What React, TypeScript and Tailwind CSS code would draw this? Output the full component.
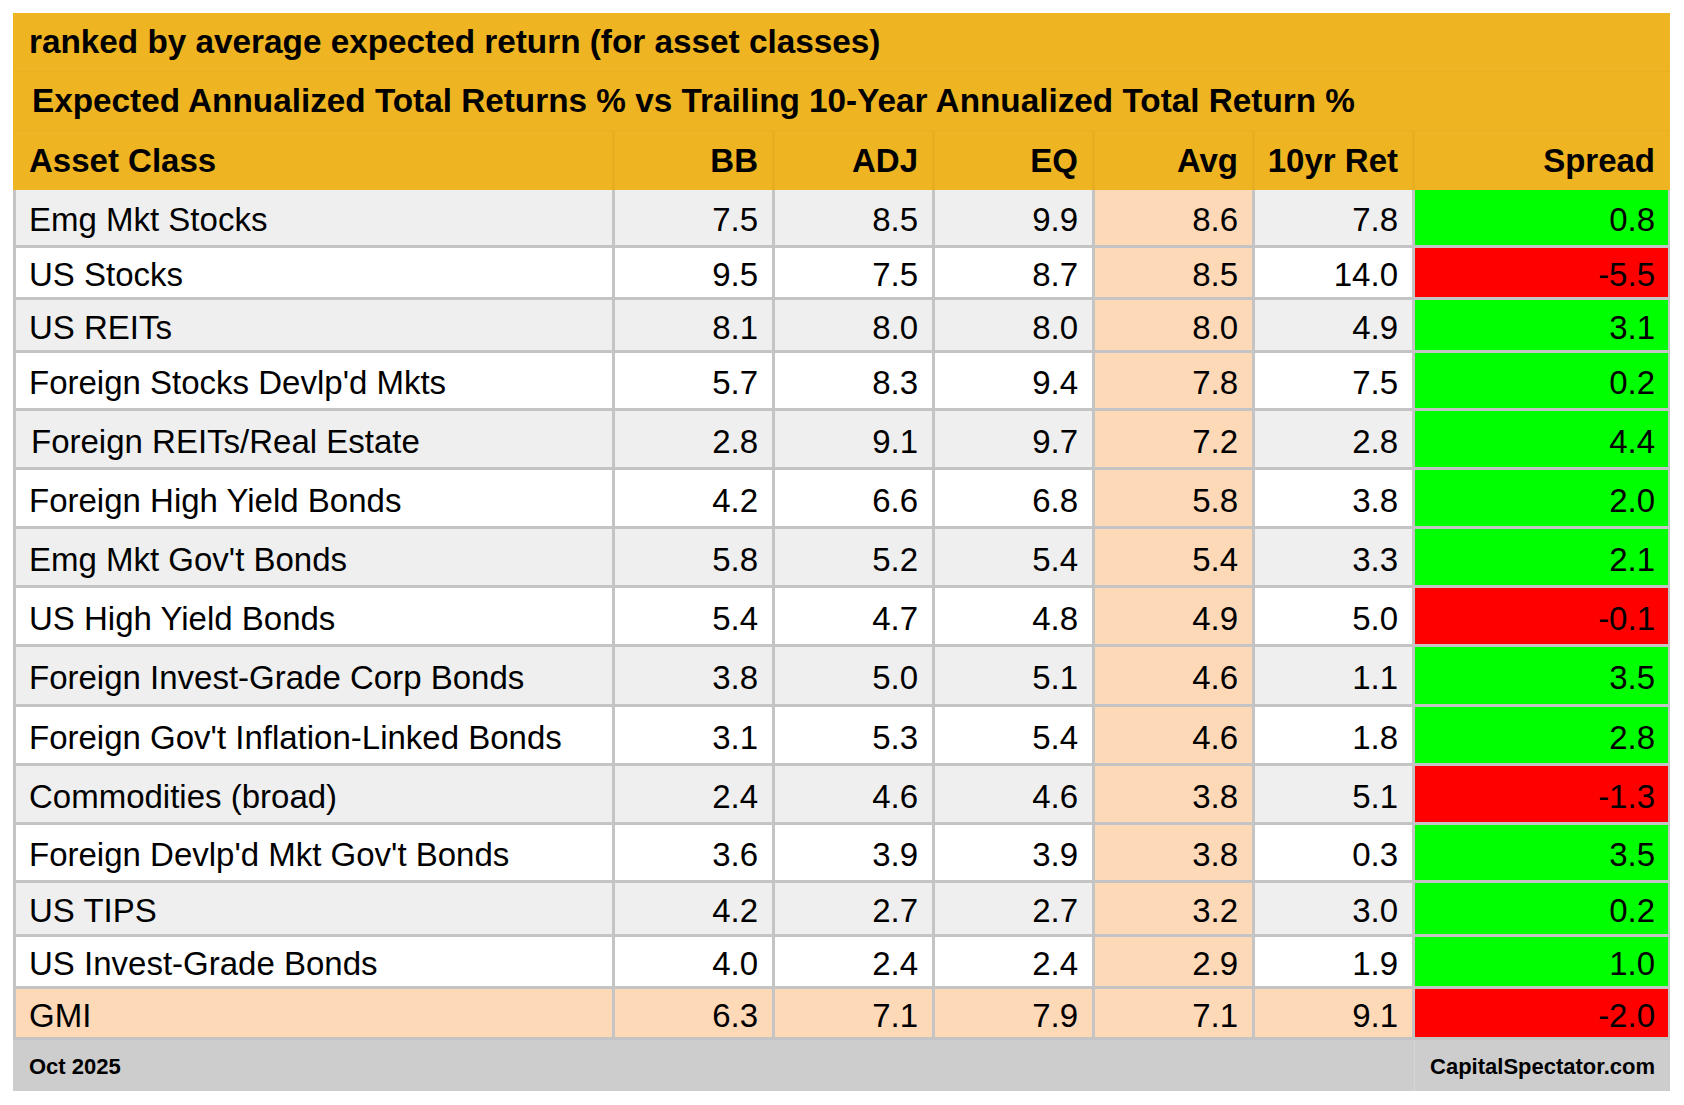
import React from 'react';

type Row = {
  name: string;
  vals: string[];
  spread: string;
  h: string;
  bg: string;
  indent?: boolean;
};

const rows: Row[] = [
  { name: 'Emg Mkt Stocks', vals: ['7.5', '8.5', '9.9', '8.6', '7.8'], spread: '0.8', h: 'h-[55px]', bg: 'bg-[#efefef]' },
  { name: 'US Stocks', vals: ['9.5', '7.5', '8.7', '8.5', '14.0'], spread: '-5.5', h: 'h-[49px]', bg: 'bg-white' },
  { name: 'US REITs', vals: ['8.1', '8.0', '8.0', '8.0', '4.9'], spread: '3.1', h: 'h-[50px]', bg: 'bg-[#efefef]' },
  { name: "Foreign Stocks Devlp'd Mkts", vals: ['5.7', '8.3', '9.4', '7.8', '7.5'], spread: '0.2', h: 'h-[55px]', bg: 'bg-white' },
  { name: 'Foreign REITs/Real Estate', vals: ['2.8', '9.1', '9.7', '7.2', '2.8'], spread: '4.4', h: 'h-[56px]', bg: 'bg-[#efefef]', indent: true },
  { name: 'Foreign High Yield Bonds', vals: ['4.2', '6.6', '6.8', '5.8', '3.8'], spread: '2.0', h: 'h-[56px]', bg: 'bg-white' },
  { name: "Emg Mkt Gov't Bonds", vals: ['5.8', '5.2', '5.4', '5.4', '3.3'], spread: '2.1', h: 'h-[56px]', bg: 'bg-[#efefef]' },
  { name: 'US High Yield Bonds', vals: ['5.4', '4.7', '4.8', '4.9', '5.0'], spread: '-0.1', h: 'h-[56px]', bg: 'bg-white' },
  { name: 'Foreign Invest-Grade Corp Bonds', vals: ['3.8', '5.0', '5.1', '4.6', '1.1'], spread: '3.5', h: 'h-[57px]', bg: 'bg-[#efefef]' },
  { name: "Foreign Gov't Inflation-Linked Bonds", vals: ['3.1', '5.3', '5.4', '4.6', '1.8'], spread: '2.8', h: 'h-[56px]', bg: 'bg-white' },
  { name: 'Commodities (broad)', vals: ['2.4', '4.6', '4.6', '3.8', '5.1'], spread: '-1.3', h: 'h-[56px]', bg: 'bg-[#efefef]' },
  { name: "Foreign Devlp'd Mkt Gov't Bonds", vals: ['3.6', '3.9', '3.9', '3.8', '0.3'], spread: '3.5', h: 'h-[55px]', bg: 'bg-white' },
  { name: 'US TIPS', vals: ['4.2', '2.7', '2.7', '3.2', '3.0'], spread: '0.2', h: 'h-[51px]', bg: 'bg-[#efefef]' },
  { name: 'US Invest-Grade Bonds', vals: ['4.0', '2.4', '2.4', '2.9', '1.9'], spread: '1.0', h: 'h-[49px]', bg: 'bg-white' },
  { name: 'GMI', vals: ['6.3', '7.1', '7.9', '7.1', '9.1'], spread: '-2.0', h: 'h-[48px]', bg: 'bg-[#fdd9b8]' },
];

const cols = 'grid grid-cols-[596px_157px_157px_157px_157px_157px_253px]';

const App = () => {
  return (
    <div className="min-h-screen bg-white pl-[13px] pt-[13px] text-black leading-[1.15] font-['Liberation_Sans',Arial,sans-serif]">
      <div className="w-[1657px]">
        {/* titles */}
        <div className="bg-[#eeb422]">
          <div className="h-[59px] flex items-center pl-[16px] border-b border-[#e9b024] text-[33.3px] font-bold">
            ranked by average expected return (for asset classes)
          </div>
          <div className="h-[59px] flex items-center pl-[19px] border-b border-[#e9b024] text-[33.3px] font-bold">
            Expected Annualized Total Returns % vs Trailing 10-Year Annualized Total Return %
          </div>
        </div>

        {/* header */}
        <div className={`${cols} h-[59px] bg-[#e8ae22] gap-x-[3px] pl-[3px] pr-[2px] text-[33px] font-bold`}>
          <div className="bg-[#eeb422] -ml-[3px] pl-[16px] flex items-center">Asset Class</div>
          {['BB', 'ADJ', 'EQ', 'Avg', '10yr Ret'].map((h) => (
            <div key={h} className="bg-[#eeb422] flex items-center justify-end pr-[14px]">
              {h}
            </div>
          ))}
          <div className="bg-[#eeb422] -mr-[2px] flex items-center justify-end pr-[15px]">Spread</div>
        </div>

        {/* body */}
        <div className="flex flex-col gap-[3px] pb-[3px] bg-[#c4c4c4] text-[33px]">
          {rows.map((r) => {
            const neg = r.spread.startsWith('-');
            const isGmi = r.name === 'GMI';
            return (
              <div key={r.name} className={`${cols} ${r.h} gap-x-[3px] pl-[3px] pr-[2px] overflow-hidden`}>
                <div className={`${r.bg} flex items-center pt-[5px] ${r.indent ? 'pl-[15px]' : 'pl-[13px]'}`}>
                  {r.name}
                </div>
                {r.vals.map((v, i) => (
                  <div
                    key={i}
                    className={`${i === 3 || isGmi ? 'bg-[#fdd9b8]' : r.bg} flex items-center justify-end pt-[5px] pr-[14px]`}
                  >
                    {v}
                  </div>
                ))}
                <div
                  className={`${neg ? 'bg-[#ff0000]' : 'bg-[#00ff00]'} flex items-center justify-end pt-[5px] pr-[13px]`}
                >
                  {r.spread}
                </div>
              </div>
            );
          })}
        </div>

        {/* footer */}
        <div className="grid grid-cols-[1401px_256px] h-[51px] text-[22px] font-bold">
          <div className="bg-[#cdcdcd] flex items-center pl-[16px] pt-[3px]">Oct 2025</div>
          <div className="bg-[#cdcdcd] border-l border-[#d6d6d6] flex items-center justify-end pr-[15px] pt-[3px]">
            CapitalSpectator.com
          </div>
        </div>
      </div>
    </div>
  );
};

export default App;
